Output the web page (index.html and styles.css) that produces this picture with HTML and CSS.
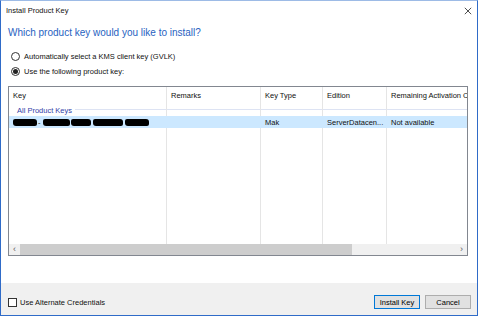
FILE: index.html
```html
<!DOCTYPE html>
<html lang="en">
<head>
  <meta charset="UTF-8" />
  <title>Install Product Key</title>
  <link rel="stylesheet" href="styles.css">
</head>
<body>

<div class="window">
  <!-- Barra de título -->
  <div class="titlebar">
    <span class="title">Install Product Key</span>
    <svg class="close" width="10" height="10" viewBox="0 0 10 10">
      <path d="M1 1 L9 9 M9 1 L1 9" stroke="#222" stroke-width="1" fill="none"/>
    </svg>
  </div>

  <div class="content">
    <h1 class="heading">Which product key would you like to install?</h1>

    <label class="radio-row">
      <span class="radio"></span>
      Automatically select a KMS client key (GVLK)
    </label>
    <label class="radio-row">
      <span class="radio checked"></span>
      Use the following product key:
    </label>

    <!-- Lista de chaves -->
    <div class="listview">
      <div class="grid">
        <div class="cell head">Key</div>
        <div class="cell head">Remarks</div>
        <div class="cell head">Key Type</div>
        <div class="cell head">Edition</div>
        <div class="cell head">Remaining Activation Count</div>

        <div class="cell group"><span class="group-label">All Product Keys</span></div>
        <div class="cell group"></div>
        <div class="cell group"></div>
        <div class="cell group"></div>
        <div class="cell group"></div>

        <div class="cell selected">
          <span class="redact r1"></span><span class="dash">-</span><span class="redact r2"></span><span class="redact r3"></span><span class="redact r4"></span><span class="redact r5"></span>
        </div>
        <div class="cell selected"></div>
        <div class="cell selected">Mak</div>
        <div class="cell selected">ServerDatacen...</div>
        <div class="cell selected">Not available</div>

        <div class="cell filler"></div>
        <div class="cell filler"></div>
        <div class="cell filler"></div>
        <div class="cell filler"></div>
        <div class="cell filler"></div>
      </div>

      <div class="hscroll">
        <span class="arrow">&#8249;</span>
        <div class="track"><div class="thumb"></div></div>
        <span class="arrow">&#8250;</span>
      </div>
    </div>
  </div>

  <!-- Rodapé -->
  <div class="footer">
    <label class="check-row">
      <span class="checkbox"></span>
      Use Alternate Credentials
    </label>
    <div class="buttons">
      <button class="btn default">Install Key</button>
      <button class="btn">Cancel</button>
    </div>
  </div>
</div>

</body>
</html>
```

FILE: styles.css
```css
* {
  margin: 0;
  padding: 0;
  box-sizing: border-box;
  font-family: 'Liberation Sans', Arial, sans-serif;
}

body {
  background: #fff;
  width: 478px;
  height: 316px;
  overflow: hidden;
}

.window {
  width: 478px;
  height: 316px;
  border: 1px solid #2f6bc8;
  border-top-color: #9dbbe6;
  display: flex;
  flex-direction: column;
  background: #fff;
  color: #111;
  font-size: 7.5px;
}

.titlebar {
  height: 19px;
  display: flex;
  align-items: center;
  justify-content: space-between;
  padding: 0 5px 0 5px;
}

.title {
  font-size: 7.5px;
}

.close {
  width: 8px;
  height: 8px;
}

.content {
  padding: 0 9px 0 7px;
}

.heading {
  font-size: 10px;
  font-weight: normal;
  color: #2762bf;
  line-height: 14px;
  margin-top: 6px;
  margin-bottom: 9px;
}

.radio-row {
  display: flex;
  align-items: center;
  height: 15px;
  padding-left: 3px;
  gap: 4px;
}

.radio {
  width: 9px;
  height: 9px;
  border: 1px solid #333;
  border-radius: 50%;
  display: flex;
  align-items: center;
  justify-content: center;
}

.radio.checked::after {
  content: "";
  width: 5px;
  height: 5px;
  border-radius: 50%;
  background: #222;
}

.listview {
  margin-top: 7px;
  height: 170px;
  border: 1px solid #828790;
  display: flex;
  flex-direction: column;
}

.grid {
  flex: 1;
  display: grid;
  grid-template-columns: 158px 94px 62px 64px 1fr;
  grid-template-rows: 17px 12px 12px 1fr;
  overflow: hidden;
}

.cell {
  border-right: 1px solid #e5e5e5;
  padding-left: 4px;
  white-space: nowrap;
  overflow: hidden;
  display: flex;
  align-items: center;
}

.cell:nth-child(5n) {
  border-right: none;
}

.group {
  background: linear-gradient(to bottom, transparent 5px, #dde3f3 5px, #dde3f3 6px, transparent 6px);
  padding-left: 0;
}

.group-label {
  color: #3341a8;
  background: #fff;
  padding: 0 3px 0 8px;
}

.selected {
  background: #cce8ff;
  border-right-color: #cce8ff;
}

.redact {
  display: inline-block;
  height: 7px;
  background: #000;
  border-radius: 2px 3px 2px 3px;
}

.r1 { width: 24px; }
.r2 { width: 27px; margin-left: 1px; }
.r3 { width: 20px; margin-left: 1px; }
.r4 { width: 30px; margin-left: 2px; }
.r5 { width: 24px; margin-left: 2px; }

.dash {
  margin: 0 1px;
}

.hscroll {
  height: 11px;
  display: flex;
  background: #f0f0f0;
}

.arrow {
  width: 11px;
  font-size: 9px;
  line-height: 10px;
  text-align: center;
  color: #606060;
}

.track {
  flex: 1;
  display: flex;
}

.thumb {
  width: 332px;
  background: #cdcdcd;
}

.footer {
  margin-top: auto;
  height: 32px;
  background: #f0f0f0;
  display: flex;
  align-items: center;
  justify-content: space-between;
  padding: 6px 6px 0 7px;
}

.check-row {
  display: flex;
  align-items: center;
  gap: 3px;
}

.checkbox {
  width: 9px;
  height: 9px;
  border: 1px solid #333;
  background: #fff;
}

.buttons {
  display: flex;
  gap: 5px;
}

.btn {
  width: 46px;
  height: 14px;
  background: #e1e1e1;
  border: 1px solid #adadad;
  font-size: 7.5px;
  color: #000;
}

.btn.default {
  border-color: #0078d7;
}
```
